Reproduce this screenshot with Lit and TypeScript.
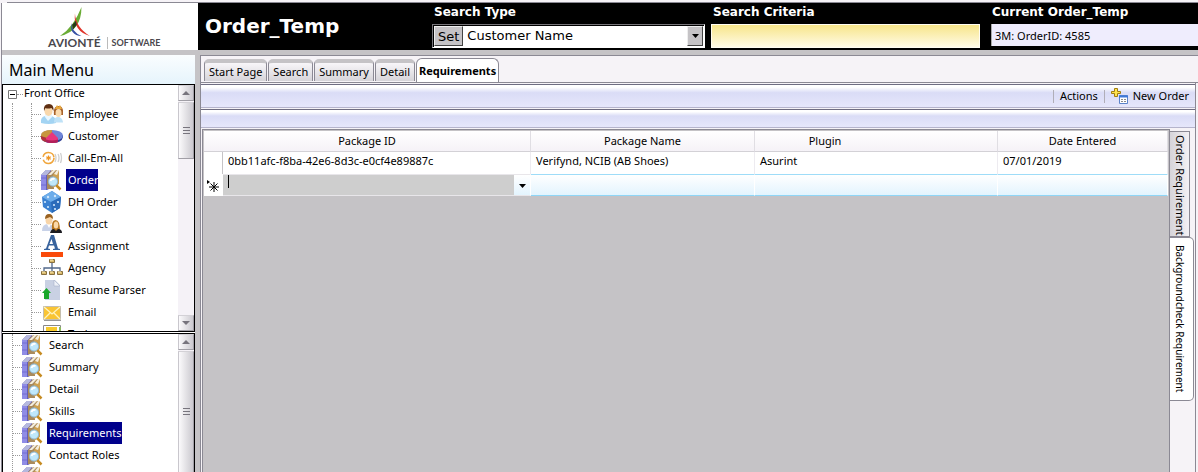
import { LitElement, html, css, svg, nothing } from "lit";
import { customElement, property, state } from "lit/decorators.js";
import { classMap } from "lit/directives/class-map.js";

const art: Record<string, unknown> = {
  employee: svg`
    <path d="M0 20v-3q1-4 5-4h4q5 0 6 5v2q-7 2-15 0z" fill="#a3d4f3"/><path d="M4 14l3 4 4-4v-3H4z" fill="#e9f7ff"/>
    <ellipse cx="7.500" cy="8" rx="4" ry="5" fill="#f9d8ac"/><path d="M3 8q-1-7 5-7 5 0 4.500 7l-2-3q-4 1-6 0z" fill="#5f2f12"/>
    <path d="M13 19q0-5 4-5t5 5v.500h-9z" fill="#bfe2f7"/><path d="M13 12q-1-9 4.500-9t4.500 9z" fill="#a8622a"/>
    <ellipse cx="17.500" cy="10" rx="3" ry="4" fill="#fbdcb0"/><path d="M14 6l2-4 1.500 2L19 2l2 4z" fill="#e8a83b"/>`,
  customer: svg`
    <path d="M0 10v2q1 6 11 6t11-6v-2z" fill="#2f3f94"/><ellipse cx="11" cy="10.500" rx="11" ry="5.500" fill="#6f86d8"/>
    <path d="M11 5Q0 5 0 10.500v2q0 2 4 4l7-8z" fill="#c8963e"/><path d="M0 11v1.500q0 3 5 4.500l1-4z" fill="#b0323e"/>
    <path d="M11 7l6 6v4q-6 2-12 0v-4z" fill="#e8377c"/><path d="M5 14.500q6 2 12 0V17q-6 2-12 0z" fill="#b01f58"/>`,
  call: svg`
    <circle cx="7.500" cy="11" r="5.500" fill="none" stroke="#f0a63c" stroke-width="1.600" stroke-dasharray="15 3"/>
    <path d="M7.500 8.500v5M5.300 9.700l4.400 2.600M9.700 9.700l-4.400 2.600" stroke="#ee9420" stroke-width="1.200"/>
    <path d="M14 7q2 4 0 8M17 7q2 4 0 8M19.500 6q2 5 0 10" fill="none" stroke="#cfcfcf" stroke-width="1.300"/>`,
  books: svg`
    <path d="M0 6l5-5h5v18l-4 2H0z" fill="#655fb8"/><path d="M0 6h5v15H0z" fill="#8f8ce6"/><path d="M0 9h5M0 16h5" stroke="#736dd0"/>
    <path d="M0 6l5-5h5L6 6z" fill="#b5b8de"/><path d="M6 6l5-5h6l-4 5v14H6z" fill="#a98a5c"/><path d="M12 6l4-5h2v14l-6 4z" fill="#cda050"/>
    <path d="M7 6l5-5h3l-5 5zM13 5l3-4h2l-2 5z" fill="#f3eddf"/><path d="M15 16l4.500 4.500" stroke="#c68b22" stroke-width="2.500"/>
    <circle cx="12" cy="12.500" r="4.600" fill="#bfe8fb" stroke="#8fb6d0" stroke-width="1"/><path d="M9.500 12q1-3 4-2" fill="none" stroke="#fff" stroke-width="2"/>`,
  cube: svg`
    <path d="M1 6L11 0l9 6-1 11-8 5-9-6z" fill="#3a80d0"/><path d="M1 6L11 0l9 6-10 5z" fill="#6dadea"/><path d="M10 11l10-5-1 11-8 5z" fill="#2b6bba"/>
    <g fill="#cfe6fb"><circle cx="7" cy="6" r="1.200"/><circle cx="14" cy="5" r="1.200"/><circle cx="4" cy="11" r="1.100"/><circle cx="7" cy="16" r="1.100"/><circle cx="13" cy="14" r="1.100"/><circle cx="17" cy="11" r="1.100"/><circle cx="14" cy="18" r="1.100"/></g>`,
  contact: svg`
    <path d="M1 18q0-7 6-7h2l4 3v4z" fill="#c8d2e8"/><path d="M6 11l2 4 2-4z" fill="#fff"/><ellipse cx="8" cy="7" rx="3.500" ry="4.500" fill="#f8d5a8"/>
    <path d="M4 6q0-5 4-5t4 5L9 4z" fill="#9a6221"/><path d="M11 18q-1-11 3.500-11T19 18z" fill="#b97822"/>
    <ellipse cx="15" cy="12" rx="2.300" ry="3.500" fill="#fbd9a9"/><path d="M9 20q1-4 4-4l2 2 2-2q4 0 4 4z" fill="#1b1b20"/>`,
  assignment: svg`
    <path fill-rule="evenodd" d="M3 15v-1l2-.5L10 0h3l4 13.500 2 .5v1h-7v-1l2-.5-1-3H8l-1 3 2 .5v1zM8.500 9H12l-1.500-5z" fill="#38639d"/>
    <path d="M0 17h22v5H0z" fill="#fa4a0a"/>`,
  agency: svg`
    <path d="M11 5v10M3 15v-4h16v4" fill="none" stroke="#52688b" stroke-width="1.300"/>
    <g fill="#d9b96b" stroke="#887040"><path d="M8.500 2.500h5v3h-5zM.5 14.500h5v3h-5zM8.500 14.500h5v3h-5zM16.500 14.500h5v3h-5z"/></g>
    <path d="M9 3h3M1 15h3M9 15h3M17 15h3" stroke="#fff1bc"/>`,
  resume: svg`
    <path d="M4 1h10l5 5v15H4z" fill="#c9d1e3"/><path d="M13 1l6 6h-6z" fill="#eef1f8" stroke="#a9b4ca" stroke-width=".6"/>
    <path d="M1 14l4.500-5 4.500 5H8v6H3v-6z" fill="#19a72b"/>`,
  email: svg`
    <path d="M2.500 5.500h17v13h-17z" fill="#f9c433" stroke="#c4beae"/><path d="M3 6l8 7 8-7M3 18l6-6M19 18l-6-6" fill="none" stroke="#fff3bd" stroke-width="1.300"/>
    <path d="M3 19.500h17" stroke="#999"/>`,
  task: svg`<path d="M2.500 2.500h17v16h-17z" fill="#fff" stroke="#888"/><path d="M5 4h11v6H5z" fill="#f7ca2c"/><path d="M18 4h2v12h-2z" fill="#8cb95c"/>`,
};

const icon = (name: string) => html`<svg class="icon" viewBox="0 0 22 22" aria-hidden="true">${art[name]}</svg>`;

@customElement("scroll-rail")
class ScrollRail extends LitElement {
  @property({ type: Boolean }) long = false;
  static styles = css`
    :host { display: flex; flex-direction: column; flex: none; width: 16px; background: #f5f2f7; }
    .cap, .thumb { box-sizing: border-box; border: 1px solid #a19fa6; border-top-color: #d3d1d6; border-left-color: #c9c7cd; background: linear-gradient(90deg, #fbfafc, #cbc9cf); }
    .cap { flex: none; height: 16px; padding: 0; display: grid; place-items: center; }
    .thumb { height: 57px; display: grid; place-items: center; margin-top: 1px; }
    .thumb.long { height: 122px; flex: none; }
    .space { flex: 1; }
    svg { display: block; }
  `;
  render() {
    return html`
      <button class="cap" aria-label="Scroll up"><svg width="8" height="4"><path d="M0 4l4-4 4 4z" fill="#77747d" /></svg></button>
      <div class=${classMap({ thumb: true, long: this.long })}>
        <svg width="7" height="8"><path d="M0 .5h7M0 3.500h7M0 6.500h7" stroke="#77747d" /></svg>
      </div>
      ${this.long ? nothing : html`<div class="space"></div>
        <button class="cap" aria-label="Scroll down"><svg width="8" height="4"><path d="M0 0l4 4 4-4z" fill="#77747d" /></svg></button>`}
    `;
  }
}

const FRONT_OFFICE: [string, string][] = [
  ["employee", "Employee"], ["customer", "Customer"], ["call", "Call-Em-All"], ["books", "Order"], ["cube", "DH Order"],
  ["contact", "Contact"], ["assignment", "Assignment"], ["agency", "Agency"], ["resume", "Resume Parser"], ["email", "Email"], ["task", "Tasks"],
];
const ORDER_PAGES = ["Search", "Summary", "Detail", "Skills", "Requirements", "Contact Roles", ""];

@customElement("side-menu")
class SideMenu extends LitElement {
  @state() area = "Order";
  @state() page = "Requirements";
  static styles = css`
    :host { display: flex; flex-direction: column; flex: none; width: 193px; min-height: 0; background: #fff; font: 11px/22px "Noto Sans", sans-serif; }
    h2 { flex: none; box-sizing: border-box; height: 29px; margin: 0; padding: 1px 0 0 7px; font-size: 16px; line-height: 28px; font-weight: 400; background: linear-gradient(#fafdff, #e6f4fc); }
    .panel { box-sizing: border-box; display: flex; border: 1px solid #000; overflow: hidden; }
    .upper { flex: none; height: 248px; margin-bottom: 1px; }
    .lower { flex: 1; min-height: 0; border-bottom: 0; }
    .tree { flex: 1; overflow: hidden; }
    .root { display: flex; align-items: center; height: 18px; padding-left: 5px; line-height: 16px; }
    .twig { width: 6px; border-top: 1px dotted #999; }
    .label { padding: 0 0 2px 1px; }
    ul { list-style: none; margin: 0; padding: 0; }
    .outer { margin-left: 9px; padding-left: 18px; border-left: 1px dotted #999; }
    .nodes { border-left: 1px dotted #999; }
    .single { margin-left: 9px; }
    .nodes li { display: flex; align-items: center; height: 22px; }
    .nodes li::before { content: ""; width: 9px; border-top: 1px dotted #999; }
    .icon { width: 22px; height: 22px; flex: none; display: block; }
    a { margin-left: 3px; padding: 0 0 0 2px; color: #000; text-decoration: none; white-space: nowrap; }
    a.on { background: #00008b; color: #fff; }
  `;
  item(name: string, text: string, on: boolean, pick: () => void) {
    return html`<li>${icon(name)}${text ? html`<a href="#" class=${classMap({ on })} @click=${(e: Event) => { e.preventDefault(); pick(); }}>${text}</a>` : nothing}</li>`;
  }
  render() {
    return html`
      <h2>Main Menu</h2>
      <nav class="panel upper" aria-label="Main menu">
        <div class="tree">
          <div class="root">
            <svg width="9" height="9"><path d="M.5.5h8v8h-8z" fill="#fff" stroke="#777" /><path d="M2 4.500h5" stroke="#000" /></svg>
            <span class="twig"></span><span class="label">Front Office</span>
          </div>
          <div class="outer"><ul class="nodes">
            ${FRONT_OFFICE.map(([i, t]) => this.item(i, t, t === this.area, () => (this.area = t)))}
          </ul></div>
        </div>
        <scroll-rail></scroll-rail>
      </nav>
      <nav class="panel lower" aria-label="Order pages">
        <div class="tree"><ul class="nodes single">
          ${ORDER_PAGES.map((t) => this.item("books", t, t === this.page, () => (this.page = t)))}
        </ul></div>
        <scroll-rail long></scroll-rail>
      </nav>
    `;
  }
}

@customElement("top-bar")
class TopBar extends LitElement {
  static styles = css`
    :host { display: flex; flex: none; height: 47px; background: #000; color: #fff; }
    .logo { box-sizing: border-box; flex: none; width: 196px; padding: 4px 0 0 46px; background: #fff; color: #4a484d; }
    .mark { display: block; margin-left: 8px; }
    .name { display: flex; align-items: center; gap: 6px; font: 700 12px/14px Lato, sans-serif; }
    .name small { font-size: 9px; line-height: 12px; padding-left: 4px; border-left: 1px solid #bbb; }
    h1 { flex: none; box-sizing: border-box; width: 234px; margin: 0; padding-left: 7px; font: 700 20px/46px "DejaVu Sans", sans-serif; }
    .field { display: flex; flex-direction: column; gap: 3px; }
    label { padding: 1px 0 0 2px; font: 700 12px/17px "DejaVu Sans", sans-serif; white-space: nowrap; }
    .type { flex: 0 1 273px; margin-right: 6px; }
    .criteria { flex: 0 1 269px; margin-right: 11px; }
    .current { flex: 1; }
    .current label { padding-left: 1px; }
    .combo { display: flex; box-sizing: border-box; height: 24px; padding: 1px; background: #fff; border: 1px solid #77757a; border-color: #77757a #fff #fff #77757a; box-shadow: inset 1px 1px #000; }
    .combo button { padding: 0 3px; background: #c5c3c6; border: 1px solid; border-color: #eee #444 #444 #eee; font: 13px/17px "DejaVu Sans", sans-serif; }
    .pick { flex: 1; display: grid; grid-template-columns: 1fr 16px; min-width: 0; }
    select { grid-area: 1 / 1 / 2 / 3; appearance: none; min-width: 0; border: 0; padding: 0 4px; background: #fff; color: #000; font: 13px/18px "DejaVu Sans", sans-serif; }
    .arrow { grid-area: 1 / 2; display: grid; place-items: center; background: #c5c3c6; border: 1px solid; border-color: #eee #444 #444 #eee; pointer-events: none; }
    input { box-sizing: border-box; width: 100%; height: 24px; margin: 0; border: 1px solid #fffdf2; border-radius: 0; background: linear-gradient(#f7e58a, #fffbe6); }
    .current input { height: 22px; padding: 1px 3px; border: 0; border-left: 1px solid #aaa; background: #efedfd; color: #000; font: 11px "Noto Sans", sans-serif; }
  `;
  render() {
    return html`
      <div class="logo">
        <svg class="mark" width="36" height="29" viewBox="0 0 36 31" aria-hidden="true">
          <path d="M26 0Q26 26 3 31Q18 21 26 0z" fill="#6aac35" />
          <path d="M19 7Q20 22 35 31Q17 26 19 7z" fill="#e0352b" />
          <path d="M15 17Q15 26 26 31Q13 30 15 17z" fill="#3650a3" />
          <path d="M16 19l4-4 1 4-4 5z" fill="#243c18" />
        </svg>
        <div class="name"><span>AVIONTÉ</span><small>SOFTWARE</small></div>
      </div>
      <h1>Order_Temp</h1>
      <div class="field type">
        <label for="type">Search Type</label>
        <div class="combo"><button>Set</button>
          <div class="pick"><select id="type"><option>Customer Name</option></select>
            <span class="arrow"><svg width="7" height="4"><path d="M0 0h7L3.500 4z" fill="#000" /></svg></span></div>
        </div>
      </div>
      <div class="field criteria"><label for="criteria">Search Criteria</label><input id="criteria" type="text" /></div>
      <div class="field current"><label for="current">Current Order_Temp</label><input id="current" type="text" readonly value="3M: OrderID: 4585" /></div>
    `;
  }
}

@customElement("package-grid")
class PackageGrid extends LitElement {
  static styles = css`
    :host { display: block; flex: 1; min-width: 0; background: #c5c3c6; border: 1px solid #8b8994; border-bottom: 0; padding: 1px 1px 0; font: 11px/20px "Noto Sans", sans-serif; }
    table { width: 100%; table-layout: fixed; border-collapse: separate; border-spacing: 0; background: #fff; }
    .mark { width: 19px; } .id { width: 308px; } .name { width: 224px; } .plugin { width: 243px; }
    th, td { box-sizing: border-box; padding: 0; text-align: left; font-weight: 400; white-space: nowrap; overflow: hidden; }
    th { height: 21px; text-align: center; background: linear-gradient(#fff, #f5f2f7); border-bottom: 1px solid #d3d1d6; border-right: 1px solid #e0dee3; }
    th.mid { padding-right: 102px; }
    .row td { height: 22px; padding: 0 0 4px 5px; line-height: 18px; border-right: 1px solid #edebf0; }
    .row td:first-child { border-right-color: #c5c3c6; }
    .new td { height: 22px; background: linear-gradient(#fff, #e3f4fe); border-top: 1px solid #9edcf8; border-bottom: 1px solid #8fd6f7; border-right: 1px solid #fff; }
    .new td:first-child { background: #fff; border-color: #fff; text-align: center; }
    .new td:nth-child(2) { border-top-color: #e8e6ea; border-bottom-color: #e8e6ea; }
    .edit { display: flex; height: 20px; }
    input { flex: 1; min-width: 0; margin: 0; border: 0; padding: 0 4px; background: #cecece; font: inherit; }
    .edit button { width: 16px; border: 0; padding: 0; background: linear-gradient(#fff, #e3f4fe); }
    .caret { width: 1px; height: 13px; background: #000; }
    .box { display: flex; flex: 1; padding-left: 5px; background: #cecece; }
    svg { display: inline-block; vertical-align: middle; }
  `;
  render() {
    return html`<table>
      <colgroup><col class="mark" /><col class="id" /><col class="name" /><col class="plugin" /><col /></colgroup>
      <thead><tr><th colspan="2">Package ID</th><th>Package Name</th><th class="mid">Plugin</th><th>Date Entered</th></tr></thead>
      <tbody>
        <tr class="row"><td></td><td>0bb11afc-f8ba-42e6-8d3c-e0cf4e89887c</td><td>Verifynd, NCIB (AB Shoes)</td><td>Asurint</td><td>07/01/2019</td></tr>
        <tr class="new">
          <td><svg width="12" height="12" viewBox="0 0 12 12"><path d="M0 0l3 2-3 2z" /><path d="M7 2v10M2 7h10M3.500 3.500l7 7M10.500 3.500l-7 7" stroke="#000" /></svg></td>
          <td><div class="edit"><div class="box"><span class="caret"></span><input aria-label="Package ID" /></div>
            <button aria-label="Choose package"><svg width="7" height="4"><path d="M0 0h7L3.500 4z" /></svg></button></div></td>
          <td></td><td></td><td></td>
        </tr>
      </tbody>
    </table>`;
  }
}

@customElement("app-root")
class AppRoot extends LitElement {
  @state() tab = "Requirements";
  static styles = css`
    :host { display: flex; flex-direction: column; height: 100vh; overflow: hidden; background: #c5c3c6; color: #000; font: 11px/20px "Noto Sans", sans-serif; }
    .strip { flex: none; height: 2px; margin-left: 7px; border-bottom: 1px solid #8b8994; }
    .frame { flex: 1; display: flex; flex-direction: column; min-height: 0; background: #f6f3f7; }
    .inner { flex: 1; display: flex; flex-direction: column; min-height: 0; margin-left: 1px; border-left: 1px solid #8b8994; background: #c5c3c6; gap: 5px; }
    .body { flex: 1; display: flex; gap: 5px; min-height: 0; }
    main { flex: 1; display: flex; flex-direction: column; min-width: 0; border-left: 1px solid #8b8994; border-top: 1px solid #8b8994; background: #f6f3f7; }
    .tabs { display: flex; align-items: flex-end; gap: 1px; height: 26px; padding-left: 3px; border-bottom: 1px solid #8b8994; }
    .tabs button { box-sizing: border-box; height: 22px; margin-bottom: 1px; padding: 0 4px; border: 1px solid #8b8994; border-top: 4px solid #c5c3c6; border-bottom: 0; border-radius: 5px 5px 0 0; background: linear-gradient(#f8f6f9, #d6d4d9); font: 11px/18px "Noto Sans", sans-serif; }
    .tabs button.on { height: 24px; margin-bottom: 0; padding: 0 2px; border-top: 1px solid #8b8994; border-radius: 6px 6px 0 0; background: #fff; font-weight: 700; line-height: 23px; }
    .work { flex: 1; display: flex; flex-direction: column; min-height: 0; margin-right: 2px; border-right: 1px solid #8b8994; padding-top: 1px; }
    .bar { box-sizing: border-box; display: flex; justify-content: flex-end; align-items: center; border-top: 1px solid #6f6d82; border-bottom: 1px solid #b5b4cc; background: linear-gradient(#fff, #fff 10%, #dadcf6 35%, #e6e7fb); }
    .tools { height: 24px; margin-bottom: 1px; gap: 6px; padding-right: 6px; }
    .blank { height: 19px; margin-bottom: 1px; }
    .bar button { display: flex; align-items: center; gap: 5px; border: 0; padding: 0; background: none; font: 11px/20px "Noto Sans", sans-serif; }
    .sep { width: 1px; height: 13px; background: #b0aeb8; }
    .area { flex: 1; display: flex; min-height: 0; margin-left: 1px; }
    .side { display: flex; flex-direction: column; align-items: flex-start; flex: none; width: 25px; padding-top: 2px; }
    .side button { box-sizing: border-box; width: 20px; height: 106px; padding: 3px 0; border: 1px solid #8b8994; border-left: 0; background: linear-gradient(90deg, #d6d4d9, #f3f1f5); writing-mode: vertical-rl; font: 11px/18px "Noto Sans", sans-serif; white-space: nowrap; }
    .side button.on { width: 24px; height: 164px; padding-right: 3px; border-radius: 0 5px 5px 0; background: #fff; font-size: 10px; }
  `;
  render() {
    const tabs = ["Start Page", "Search", "Summary", "Detail", "Requirements"];
    return html`
      <div class="frame">
        <div class="strip"></div>
        <div class="inner">
          <top-bar></top-bar>
          <div class="body">
            <side-menu></side-menu>
            <main>
              <div class="tabs" role="tablist">
                ${tabs.map((t) => html`<button role="tab" class=${classMap({ on: t === this.tab })} @click=${() => (this.tab = t)}>${t}</button>`)}
              </div>
              <div class="work">
                <div class="bar tools">
                  <span class="sep"></span><button>Actions</button><span class="sep"></span>
                  <button><svg width="17" height="16" viewBox="0 0 17 16" aria-hidden="true">
                    <path d="M3.500.5h3v3h3v2h-3v3h-3v-3h-3v-2h3z" fill="#ffe34f" stroke="#a07c10" />
                    <path d="M8.500 7.500h8v8h-8z" fill="#fff" stroke="#5b83c9" /><path d="M8 8.500h9" stroke="#3e77d8" stroke-width="2" /><path d="M10 11.500h5M10 13.500h5" stroke="#8b8b8b" stroke-dasharray="2 1" />
                  </svg>New Order</button>
                </div>
                <div class="bar blank"></div>
                <div class="area">
                  <package-grid></package-grid>
                  <div class="side" role="tablist"><button role="tab">Order Requirement</button><button role="tab" class="on">Backgroundcheck Requirement</button></div>
                </div>
              </div>
            </main>
          </div>
        </div>
      </div>
    `;
  }
}
